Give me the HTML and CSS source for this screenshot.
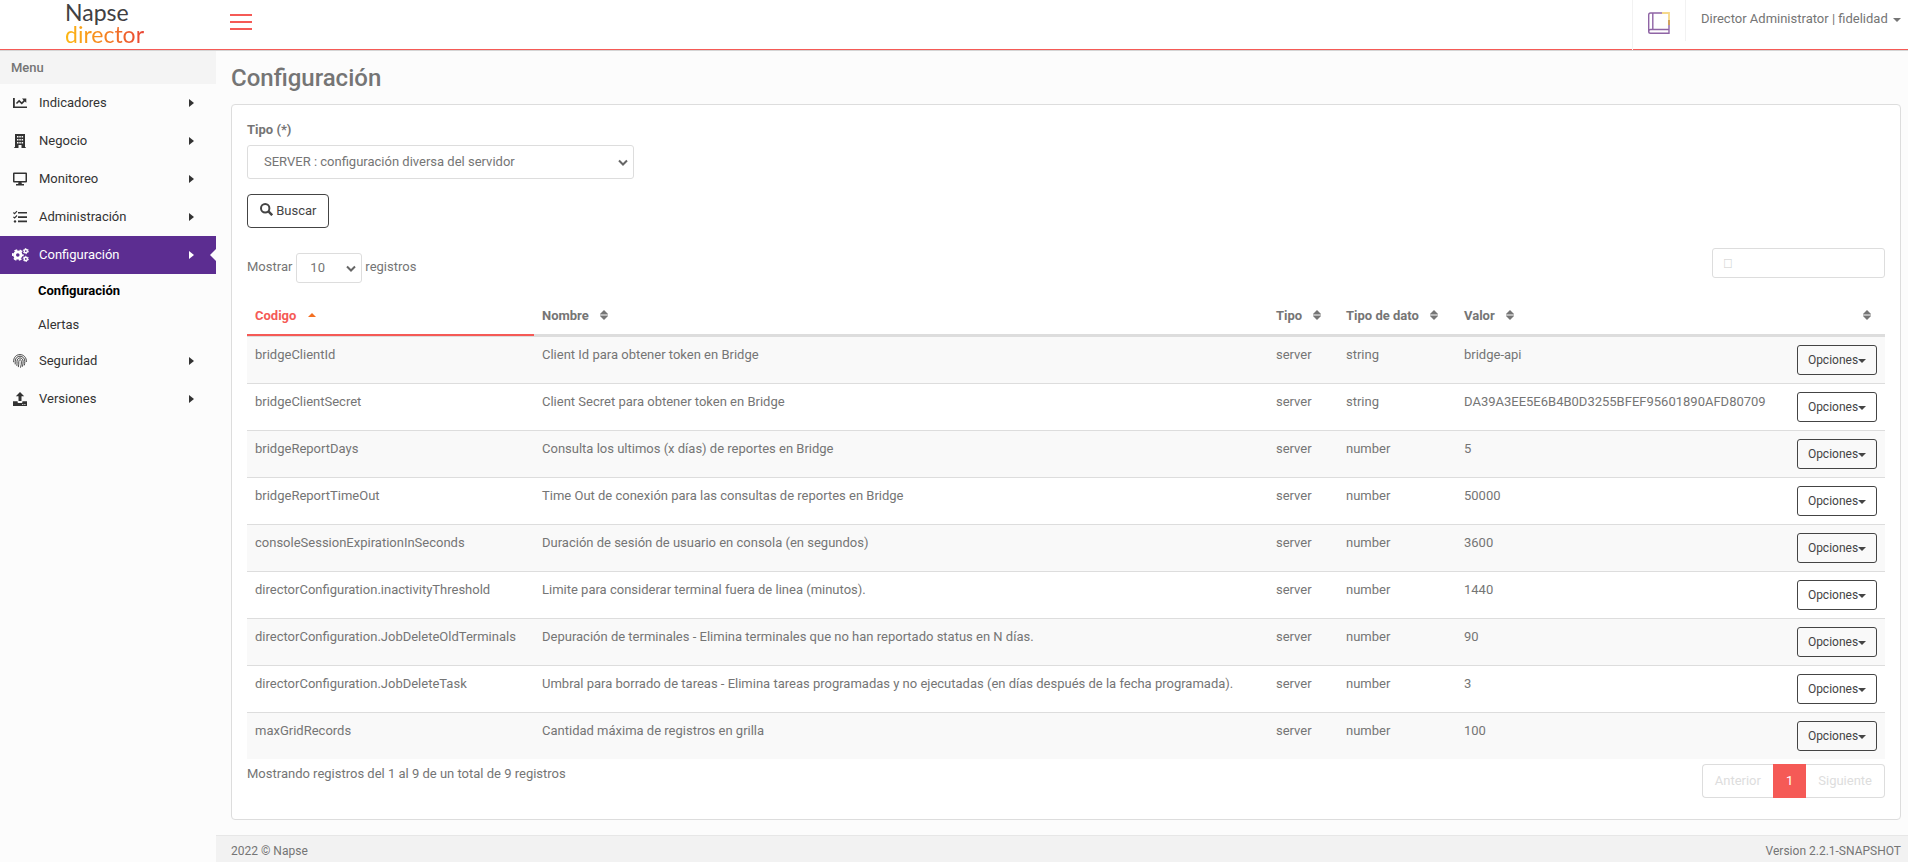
FILE: index.html
```html
<!DOCTYPE html>
<html lang="es">
<head>
  <meta charset="UTF-8">
  <meta name="viewport" content="width=device-width, initial-scale=1.0">
  <title>Napse director - Configuración</title>
  <link rel="stylesheet" href="styles.css">
</head>
<body>
  <svg class="sprite" width="0" height="0" aria-hidden="true">
    <symbol id="sort" viewBox="0 0 8 10">
      <path d="M4 0L8 4v.5H0V4zM4 10L0 6v-.5h8V6z"/>
    </symbol>
    <symbol id="sort-up" viewBox="0 0 8 10">
      <path d="M4 3L8 7H0z"/>
    </symbol>
  </svg>

  <header class="topbar">
    <a class="logo" href="#">
      <span class="logo-top">Napse</span>
      <span class="logo-bottom">director</span>
    </a>
    <button class="toggler" type="button" aria-label="Menu">
      <span></span><span></span><span></span>
    </button>
    <div class="topbar-right">
      <a class="manual" href="#" aria-label="Manual">
        <svg width="22" height="22" viewBox="0 0 22 22" fill="none" stroke-width="1.4">
          <path stroke="#8f64a5" d="M15 1H2.500Q.7 1 .7 3v16.500Q.7 21.300 2.500 21.300H21V17.500H2.500Q.8 17.500 .8 19.500M4.800 1v16.500M21 17.500V13"/>
          <path stroke="#f6d98a" stroke-width="1.800" d="M14 1h7v7"/>
          <path stroke="#cf9a4c" stroke-width="1.800" d="M21 8v5"/>
        </svg>
      </a>
      <button class="user" type="button">Director Administrator | fidelidad <i class="caret"></i></button>
    </div>
  </header>

  <div class="wrapper">
    <nav class="sidebar">
      <div class="menu-title">Menu</div>
      <ul class="menu">
        <li><a href="#">
          <svg viewBox="0 0 14 14"><path d="M0 2h1.800v8.400H14V12H0z"/><path d="M9 2.500h4.300v4.300l-1.500-1.400-3 3.200-2.700-2.500L4 8.100 2.900 7l3.200-3.200 2.700 2.500 1.700-2z"/></svg>
          Indicadores<i class="arrow"></i></a></li>
        <li><a href="#">
          <svg viewBox="0 0 14 14"><path fill-rule="evenodd" d="M2 0h10v13h.7v1H8.500v-3h-3v3H1.300v-1H2zM4 2v1.500h1.500V2zm2.300 0v1.500h1.500V2zm2.300 0v1.500h1.500V2zM4 5v1.500h1.500V5zm2.300 0v1.500h1.500V5zm2.300 0v1.500h1.500V5zM4 8v1.500h1.500V8zm2.300 0v1.500h1.500V8zm2.300 0v1.500h1.500V8z"/></svg>
          Negocio<i class="arrow"></i></a></li>
        <li><a href="#">
          <svg viewBox="0 0 14 14"><path fill-rule="evenodd" d="M1 .5h12q1 0 1 1v8q0 1-1 1H8.500l.4 1.500H11v1.500H3V12h2.100l.4-1.500H1q-1 0-1-1v-8q0-1 1-1zM1.500 2v7h11V2z"/></svg>
          Monitoreo<i class="arrow"></i></a></li>
        <li><a href="#">
          <svg viewBox="0 0 14 14"><path d="M5 2h9v1.600H5zM5 6.300h9v1.600H5zM5 10.600h9v1.600H5z"/><path fill="none" stroke="currentColor" stroke-width="1.100" d="M.4 2.500l1.200 1.200L4 1.200M.4 6.800l1.200 1.200L4 5.500"/><circle cx="2" cy="11.400" r="1.200"/></svg>
          Administración<i class="arrow"></i></a></li>
        <li class="active"><a href="#">
          <svg class="cogs" viewBox="0 0 17 14"><g fill="none" stroke="currentColor"><circle cx="5.800" cy="7" r="3.200" stroke-width="2.800"/><circle cx="5.800" cy="7" r="5" stroke-width="1.800" stroke-dasharray="2.800 2.436" stroke-dashoffset="1.400"/><circle cx="13.800" cy="3.100" r="1.600" stroke-width="1.400"/><circle cx="13.800" cy="3.100" r="2.600" stroke-width="1" stroke-dasharray="1.500 1.222"/><circle cx="13.800" cy="10.900" r="1.600" stroke-width="1.400"/><circle cx="13.800" cy="10.900" r="2.600" stroke-width="1" stroke-dasharray="1.500 1.222"/></g></svg>
          Configuración<i class="arrow"></i></a>
          <ul class="submenu">
            <li><a class="current" href="#">Configuración</a></li>
            <li><a href="#">Alertas</a></li>
          </ul>
        </li>
        <li><a href="#">
          <svg viewBox="0 0 14 14" fill="none"><g fill="none" stroke="currentColor" stroke-width=".9" stroke-linecap="round"><path d="M.6 7.800C.4 3 3.500.6 7 .6s6.600 2.600 6.400 7"/><path d="M2.200 10V7.300C2.300 4 4.500 2.200 7 2.200s4.900 2 4.800 5.100c0 1.500-.1 2.500-.4 3.700"/><path d="M3.900 11.500c.2-1.500.1-2.500.1-4.100C4.100 5.200 5.400 3.900 7 3.900s3.100 1.300 3.100 3.400c0 1.800-.1 3.300-.6 5"/><path d="M5.400 12.700c.4-1.800.4-3.300.4-5 0-2.600 2.600-2.600 2.600 0 0 2.200-.2 3.700-.8 5.600"/></g></svg>
          Seguridad<i class="arrow"></i></a></li>
        <li><a href="#">
          <svg viewBox="0 0 14 14"><path d="M7 0l4.200 4.300H8.500V9h-3V4.300H2.800z"/><path fill-rule="evenodd" d="M0 9.300h4.600v.9q0 .8.800.8h3.200q.8 0 .8-.8v-.9H14V14H0zM9.300 12v1h1v-1zm2.100 0v1h1v-1z"/></svg>
          Versiones<i class="arrow"></i></a></li>
      </ul>
    </nav>

    <div class="content">
      <main class="main">
        <h1>Configuración</h1>
        <section class="card">
          <form class="filter">
            <label for="tipo">Tipo (*)</label>
            <select class="field" id="tipo">
              <option>SERVER : configuración diversa del servidor</option>
            </select>
            <button class="btn" type="button">
              <svg width="13" height="13" viewBox="0 0 13 13" fill="none" stroke="currentColor"><circle cx="5.200" cy="5.200" r="4.200" stroke-width="2"/><path stroke-width="2.500" d="M8.200 8.200l4 4"/></svg>
              Buscar
            </button>
          </form>

          <div class="table-tools">
            <div class="length">
              <label for="length">Mostrar</label>
              <select class="field" id="length">
                <option>10</option>
              </select>
              <span>registros</span>
            </div>
            <input class="field search" type="search" placeholder="&#xf002;" aria-label="Buscar registros">
          </div>

          <table class="grid">
            <colgroup>
              <col class="col-code">
              <col>
              <col class="col-type">
              <col class="col-data">
              <col class="col-value">
              <col class="col-options">
            </colgroup>
            <thead>
              <tr>
                <th class="sorted">Codigo <svg><use href="#sort-up"/></svg></th>
                <th>Nombre <svg><use href="#sort"/></svg></th>
                <th>Tipo <svg><use href="#sort"/></svg></th>
                <th>Tipo de dato <svg><use href="#sort"/></svg></th>
                <th>Valor <svg><use href="#sort"/></svg></th>
                <th class="options"><svg><use href="#sort"/></svg></th>
              </tr>
            </thead>
            <tbody>
              <tr>
                <td>bridgeClientId</td>
                <td>Client Id para obtener token en Bridge</td>
                <td>server</td>
                <td>string</td>
                <td>bridge-api</td>
                <td><button class="btn btn-sm" type="button">Opciones<i class="caret"></i></button></td>
              </tr>
              <tr>
                <td>bridgeClientSecret</td>
                <td>Client Secret para obtener token en Bridge</td>
                <td>server</td>
                <td>string</td>
                <td>DA39A3EE5E6B4B0D3255BFEF95601890AFD80709</td>
                <td><button class="btn btn-sm" type="button">Opciones<i class="caret"></i></button></td>
              </tr>
              <tr>
                <td>bridgeReportDays</td>
                <td>Consulta los ultimos (x días) de reportes en Bridge</td>
                <td>server</td>
                <td>number</td>
                <td>5</td>
                <td><button class="btn btn-sm" type="button">Opciones<i class="caret"></i></button></td>
              </tr>
              <tr>
                <td>bridgeReportTimeOut</td>
                <td>Time Out de conexión para las consultas de reportes en Bridge</td>
                <td>server</td>
                <td>number</td>
                <td>50000</td>
                <td><button class="btn btn-sm" type="button">Opciones<i class="caret"></i></button></td>
              </tr>
              <tr>
                <td>consoleSessionExpirationInSeconds</td>
                <td>Duración de sesión de usuario en consola (en segundos)</td>
                <td>server</td>
                <td>number</td>
                <td>3600</td>
                <td><button class="btn btn-sm" type="button">Opciones<i class="caret"></i></button></td>
              </tr>
              <tr>
                <td>directorConfiguration.inactivityThreshold</td>
                <td>Limite para considerar terminal fuera de linea (minutos).</td>
                <td>server</td>
                <td>number</td>
                <td>1440</td>
                <td><button class="btn btn-sm" type="button">Opciones<i class="caret"></i></button></td>
              </tr>
              <tr>
                <td>directorConfiguration.JobDeleteOldTerminals</td>
                <td>Depuración de terminales - Elimina terminales que no han reportado status en N días.</td>
                <td>server</td>
                <td>number</td>
                <td>90</td>
                <td><button class="btn btn-sm" type="button">Opciones<i class="caret"></i></button></td>
              </tr>
              <tr>
                <td>directorConfiguration.JobDeleteTask</td>
                <td>Umbral para borrado de tareas - Elimina tareas programadas y no ejecutadas (en días después de la fecha programada).</td>
                <td>server</td>
                <td>number</td>
                <td>3</td>
                <td><button class="btn btn-sm" type="button">Opciones<i class="caret"></i></button></td>
              </tr>
              <tr>
                <td>maxGridRecords</td>
                <td>Cantidad máxima de registros en grilla</td>
                <td>server</td>
                <td>number</td>
                <td>100</td>
                <td><button class="btn btn-sm" type="button">Opciones<i class="caret"></i></button></td>
              </tr>
            </tbody>
          </table>

          <div class="table-foot">
            <div>Mostrando registros del 1 al 9 de un total de 9 registros</div>
            <div class="pagination">
              <button type="button" disabled>Anterior</button>
              <button class="page-active" type="button">1</button>
              <button type="button" disabled>Siguiente</button>
            </div>
          </div>
        </section>
      </main>
      <footer class="footer">
        <span>2022 © Napse</span>
        <span>Version 2.2.1-SNAPSHOT</span>
      </footer>
    </div>
  </div>
</body>
</html>
```
FILE: styles.css
```css
* {
  box-sizing: border-box;
}

body {
  margin: 0;
  min-height: 100vh;
  display: flex;
  flex-direction: column;
  font-family: Roboto, sans-serif;
  font-size: 13px;
  line-height: 20px;
  color: #757575;
  background: #fcfcfc;
}

a {
  color: inherit;
  text-decoration: none;
}

button,
input,
select {
  font: inherit;
  color: inherit;
}

button {
  cursor: pointer;
}

ul {
  list-style: none;
  margin: 0;
  padding: 0;
}

.sprite {
  position: absolute;
}

.caret {
  display: inline-block;
  border: 4px solid transparent;
  border-top-color: currentColor;
  border-bottom: 0;
  vertical-align: middle;
}

/* top bar */
.topbar {
  display: flex;
  height: 51px;
  background: #fff;
  border-bottom: 1px solid #d5d5d5;
  box-shadow: inset 0 -1px #f55a56;
}

.logo {
  width: 216px;
  padding: 1px 0 0 65px;
  font-family: Lato, sans-serif;
  font-size: 23px;
  line-height: 22px;
}

.logo span {
  display: block;
  width: max-content;
}

.logo-top {
  color: #414042;
}

.logo-bottom {
  color: transparent;
  background: linear-gradient(90deg, #fdb913, #f58220 50%, #e94435);
  background-clip: text;
}

.toggler {
  align-self: flex-start;
  display: flex;
  flex-direction: column;
  gap: 5px;
  width: 50px;
  padding: 14px;
  border: 0;
  background: none;
}

.toggler span {
  width: 22px;
  height: 2px;
  background: #f55a56;
}

.topbar-right {
  display: flex;
  align-items: flex-start;
  margin-left: auto;
  border-left: 1px solid #f2f2f2;
}

.manual {
  height: 41px;
  padding: 12px 15px;
  border-right: 1px solid #f2f2f2;
}

.manual svg {
  display: block;
}

.user {
  padding: 9px 7px 8px 15px;
  border: 0;
  background: none;
}

.user .caret {
  margin-left: 2px;
}

/* sidebar */
.wrapper {
  flex: 1;
  display: flex;
}

.sidebar {
  width: 216px;
  flex: none;
  color: #333;
}

.menu-title {
  padding: 7px 11px 6px;
  font-weight: 500;
  color: #757575;
  background: #f4f4f4;
}

.menu > li > a {
  position: relative;
  display: flex;
  align-items: center;
  height: 38px;
  padding: 0 22px 1px 39px;
}

.menu > li > a svg {
  position: absolute;
  left: 13px;
  width: 14px;
  height: 14px;
  fill: currentColor;
}

.menu > li > a .cogs {
  left: 12px;
  width: 17px;
}

.arrow {
  margin-left: auto;
  border: 4px solid transparent;
  border-left: 5px solid currentColor;
  border-right: 0;
}

.menu > .active > a {
  color: #fff;
  background: #5c2d91;
}

.menu > .active > a::after {
  content: "";
  position: absolute;
  right: 0;
  border: 6px solid transparent;
  border-right-color: #fcfcfc;
  border-left: 0;
}

.submenu a {
  display: block;
  padding: 7px 38px;
}

.submenu .current {
  font-weight: 700;
  color: #000;
}

/* content */
.content {
  flex: 1;
  min-width: 0;
  display: flex;
  flex-direction: column;
}

.main {
  flex: 1;
  padding: 12px 7px 15px 15px;
}

h1 {
  margin: 0 0 11px;
  font-size: 24px;
  font-weight: 500;
  line-height: 30px;
}

.card {
  padding: 15px 15px 21px;
  background: #fff;
  border: 1px solid #ddd;
  border-radius: 4px;
}

.field {
  height: 30px;
  border: 1px solid #ddd;
  border-radius: 3px;
  background: #fff;
}

select.field {
  appearance: none;
  background: #fff url("data:image/svg+xml,%3Csvg xmlns='http://www.w3.org/2000/svg' viewBox='0 0 10 7'%3E%3Cpath d='M1 1.500l4 4 4-4' fill='none' stroke='%23666' stroke-width='2'/%3E%3C/svg%3E") no-repeat right 5px center / 10px 7px;
}

.filter {
  display: flex;
  flex-direction: column;
  align-items: flex-start;
}

.filter label {
  margin-bottom: 5px;
  font-weight: 700;
}

.filter .field {
  width: 387px;
  height: 34px;
  margin-bottom: 15px;
  padding-left: 16px;
}

.btn {
  height: 34px;
  padding: 0 12px;
  color: #444;
  background: none;
  border: 1px solid #444;
  border-radius: 4px;
}

.btn svg {
  vertical-align: -1px;
}

.btn-sm {
  width: 80px;
  height: 30px;
  padding: 0 8px;
  font-size: 12px;
  border-radius: 3px;
}

.table-tools {
  display: flex;
  justify-content: space-between;
  align-items: flex-start;
  margin: 20px 0 15px;
}

.length {
  display: flex;
  gap: 3px;
  padding-top: 5px;
  line-height: 28px;
}

.length .field {
  width: 66px;
  margin-left: 1px;
  padding-left: 13px;
}

.search {
  width: 173px;
  padding: 0 10px;
}

.search::placeholder {
  font-family: "Liberation Sans", sans-serif;
  color: #ccc;
}

/* table */
.grid {
  width: 100%;
  table-layout: fixed;
  border-collapse: separate;
  border-spacing: 0;
}

.col-code {
  width: 287px;
}

.col-type {
  width: 70px;
}

.col-data {
  width: 118px;
}

.col-value {
  width: 333px;
}

.col-options {
  width: 96px;
}

.grid th {
  height: 38px;
  padding: 0 8px;
  text-align: left;
  font-weight: 700;
  white-space: nowrap;
  border-bottom: 2px solid #ddd;
}

.grid th svg {
  width: 8px;
  height: 10px;
  margin-left: 8px;
  fill: currentColor;
}

.grid .sorted {
  color: #f55a56;
  border-bottom-color: #f55a56;
}

.grid .sorted svg {
  fill: #f36f21;
}

.grid .options {
  padding-right: 14px;
  text-align: right;
}

.grid td {
  height: 47px;
  padding: 8px;
  vertical-align: top;
  border-top: 1px solid #ddd;
}

.grid td .btn {
  display: block;
}

.grid tbody tr:nth-child(odd) {
  background: #f9f9f9;
}

.table-foot {
  display: flex;
  justify-content: space-between;
  padding-top: 5px;
}

.pagination {
  display: flex;
}

.pagination button {
  height: 34px;
  padding: 0 12px;
  color: #ddd;
  background: #fff;
  border: 1px solid #ddd;
}

.pagination button:first-child {
  border-right: 0;
  border-radius: 4px 0 0 4px;
}

.pagination button:last-child {
  border-left: 0;
  border-radius: 0 4px 4px 0;
}

.pagination .page-active {
  color: #fff;
  background: #f55a56;
  border-color: #f55a56;
}

/* footer */
.footer {
  display: flex;
  justify-content: space-between;
  padding: 5px 7px 1px 15px;
  font-size: 12px;
  background: #f2f2f2;
  border-top: 1px solid #e7e7e7;
}
```
